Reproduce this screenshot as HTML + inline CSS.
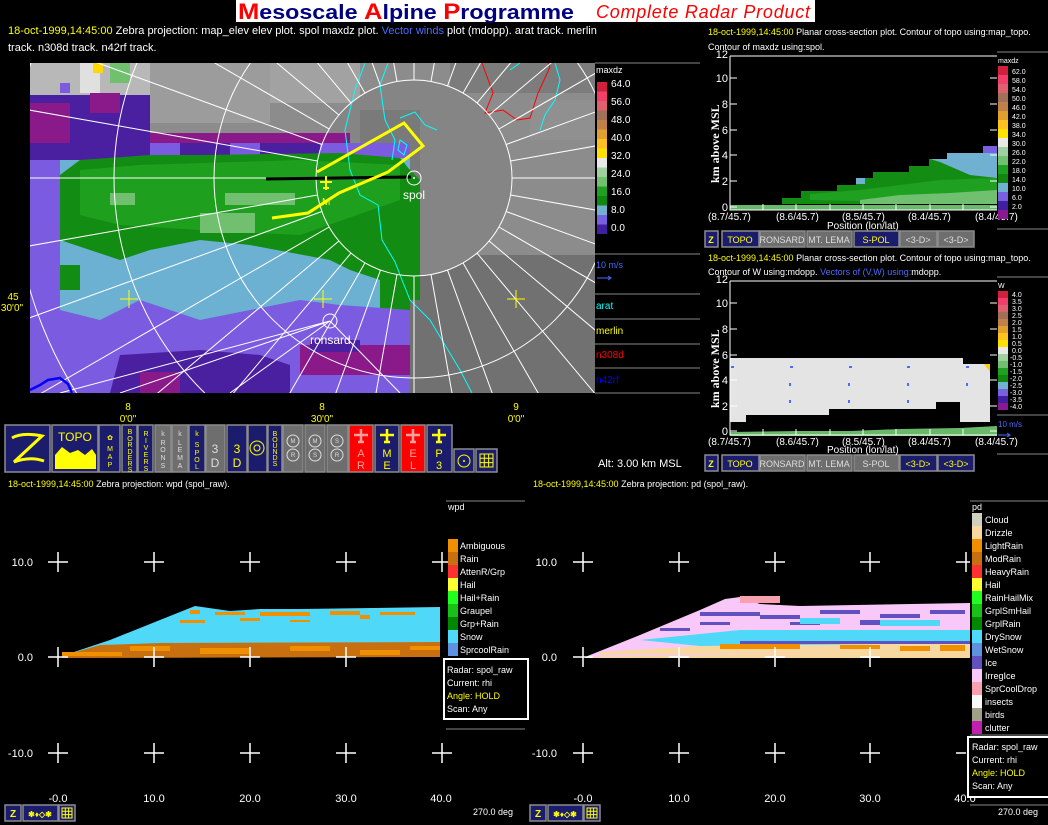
<!DOCTYPE html>
<html><head><meta charset="utf-8"><style>
html,body{margin:0;padding:0;background:#000;width:1048px;height:825px;overflow:hidden}
svg{display:block}
text{font-family:"Liberation Sans",sans-serif;}
</style></head><body>
<svg width="1048" height="825" viewBox="0 0 1048 825" xmlns="http://www.w3.org/2000/svg">
<rect width="1048" height="825" fill="#000"/>
<!-- Title -->
<rect x="236" y="0" width="579" height="22" fill="#fff"/>
<text x="238" y="19" font-size="20" font-weight="bold" fill="#000080" textLength="336" lengthAdjust="spacingAndGlyphs"><tspan fill="#f00" font-size="22">M</tspan>esoscale <tspan fill="#f00" font-size="22">A</tspan>lpine <tspan fill="#f00" font-size="22">P</tspan>rogramme</text>
<text x="596" y="18" font-size="18" font-style="italic" fill="#f00" textLength="214">Complete Radar Product</text>
<!-- header text -->
<g font-size="11" fill="#fff">
<text x="8" y="34"><tspan fill="#ff0">18-oct-1999,14:45:00</tspan>  Zebra projection: map_elev elev  plot.  spol maxdz  plot.  <tspan fill="#4a6cff">Vector winds</tspan> plot (mdopp). arat track.   merlin</text>
<text x="8" y="51">track.   n308d track.   n42rf track.</text>
</g>
<!-- MAP -->
<defs><clipPath id="mc"><rect x="30" y="63" width="565" height="330"/></clipPath></defs>
<g clip-path="url(#mc)">
<rect x="30" y="63" width="565" height="330" fill="#8c8c8c"/>
<rect x="30" y="63" width="120" height="40" fill="#b8b8b8"/>
<rect x="150" y="63" width="120" height="60" fill="#9c9c9c"/>
<rect x="270" y="63" width="90" height="40" fill="#a2a2a2"/>
<rect x="450" y="63" width="145" height="30" fill="#7c7c7c"/>
<rect x="530" y="100" width="65" height="40" fill="#909090"/>
<rect x="410" y="255" width="185" height="138" fill="#717171"/>
<circle cx="414" cy="178" r="98" fill="#858585"/>
<rect x="360" y="110" width="60" height="80" fill="#7a7a7a"/>
<!-- data -->
<polygon points="30,95 140,95 140,133 345,133 345,143 410,143 410,240 420,250 420,393 30,393" fill="#6cb0d2"/>
<rect x="30" y="95" width="120" height="65" fill="#4a1fa0"/>
<rect x="30" y="103" width="40" height="40" fill="#8a1a8a"/>
<rect x="90" y="93" width="30" height="20" fill="#8a1a8a"/>
<rect x="60" y="83" width="10" height="10" fill="#7b5ce0"/>
<rect x="80" y="63" width="20" height="30" fill="#e0e0e0"/>
<rect x="93" y="63" width="10" height="10" fill="#ffd800"/>
<rect x="110" y="63" width="20" height="20" fill="#70c070"/>
<rect x="150" y="133" width="200" height="15" fill="#8a1a8a"/>
<rect x="150" y="143" width="260" height="15" fill="#7b5ce0"/>
<rect x="180" y="143" width="50" height="15" fill="#4a1fa0"/>
<rect x="260" y="143" width="60" height="12" fill="#4a1fa0"/>
<rect x="30" y="160" width="30" height="233" fill="#7b5ce0"/>
<polygon points="60,175 80,160 150,155 200,155 340,153 400,158 410,170 420,180 420,250 405,260 380,280 350,270 330,260 250,245 200,240 150,250 120,260 90,250 60,240" fill="#138c13"/>
<polygon points="80,170 140,165 300,160 400,165 400,200 300,235 200,230 120,225 80,215" fill="#1ea01e"/>
<rect x="110" y="193" width="25" height="12" fill="#70c070"/>
<rect x="225" y="193" width="70" height="12" fill="#70c070"/>
<rect x="200" y="213" width="55" height="20" fill="#70c070"/>
<rect x="60" y="265" width="20" height="25" fill="#138c13"/>
<rect x="380" y="250" width="40" height="60" fill="#138c13"/>
<polygon points="30,330 60,310 100,320 140,300 200,320 250,310 300,300 340,305 410,310 410,393 30,393" fill="#7b5ce0"/>
<polygon points="110,393 120,355 200,350 260,355 290,365 290,393" fill="#4a1fa0"/>
<rect x="140" y="372" width="40" height="21" fill="#8a1a8a"/>
<rect x="300" y="345" width="110" height="30" fill="#8a1a8a"/>
<rect x="310" y="340" width="50" height="12" fill="#4a1fa0"/>
<rect x="410" y="300" width="185" height="93" fill="#717171"/>
<!-- contours -->
<path d="M365,63 L355,90 L345,130 L350,170 L360,195 L378,205 L382,240 L395,262 L402,280 L410,300 L430,320 L445,345 L460,370 L472,393" stroke="#0ff" fill="none" stroke-width="1"/>
<path d="M388,63 L380,85 L385,120 L395,140 L392,160 M400,118 L415,112 L425,125 L437,130 M398,150 L400,140 L407,145 L404,155 Z" stroke="#0ff" fill="none"/>
<path d="M555,63 L560,80 L555,100 L545,115 L540,130 M520,63 L510,70" stroke="#0ff" fill="none"/>
<path d="M482,63 L493,93 L485,113 L503,110 L517,120 L530,118 L538,93 L550,67 L548,63" stroke="#f00" fill="none"/>
<!-- rings & radials -->
<g stroke="#fff" fill="none" stroke-width="1">
<circle cx="414" cy="178" r="98"/><circle cx="414" cy="178" r="200"/><circle cx="414" cy="178" r="300"/><circle cx="414" cy="178" r="400"/>
<path d="M512 178 L1114 178 M510.5 195 L1103.5 299.8 M506.1 211.5 L1072 417.4 M498.9 227 L1020 528 M489.1 241 L950 628 M477 253.1 L864 714 M463 262.9 L764 784 M447.5 270.1 L653 836 M431 274.5 L536 867.5 M414 276 L414 878 M397 274.5 L292 867.5 M380.5 270.1 L175 836 M365 262.9 L64 784 M351 253.1 L-36 714 M338.9 241 L-122 628 M329.1 227 L-192 528 M321.9 211.5 L-244 417.4 M317.5 195 L-275.5 299.8 M316 178 L-286 178 M317.5 161 L-275.5 56.2 M321.9 144.5 L-244 -61.4 M329.1 129 L-192 -172 M338.9 115 L-122 -272 M351 102.9 L-36 -358 M365 93.1 L64 -428 M380.5 85.9 L175 -480 M397 81.5 L292 -511.5 M414 80 L414 -522 M431 81.5 L536 -511.5 M447.5 85.9 L653 -480 M463 93.1 L764 -428 M477 102.9 L864 -358 M489.1 115 L950 -272 M498.9 129 L1020 -172 M506.1 144.5 L1072 -61.4 M510.5 161 L1103.5 56.2"/>
<path d="M330,321 L60,393 M330,321 L120,393 M330,321 L230,393 M330,321 L400,393"/>
</g>
<!-- tracks -->
<path d="M266,179 L411,177" stroke="#000" stroke-width="3"/>
<path d="M317,172 L404,123 L423,146 L388,172 L339,193 L308,213 L272,218" stroke="#ff0" stroke-width="3" fill="none"/>
<path d="M326,176 L326,190 M320,182 L332,182 M323,188 L329,188" stroke="#ff0" stroke-width="2"/>
<text x="322" y="205" font-size="10" fill="#ff0">M</text>
<circle cx="414" cy="178" r="7" stroke="#fff" fill="none"/><circle cx="414" cy="178" r="1" fill="#fff"/>
<text x="403" y="199" font-size="12" fill="#fff">spol</text>
<circle cx="330" cy="321" r="7" stroke="#fff" fill="none"/>
<text x="310" y="344" font-size="12" fill="#fff">ronsard</text>
<path d="M120,299 h18 M129,290 v18 M314,299 h18 M323,290 v18 M507,299 h18 M516,290 v18" stroke="#ff0"/>
<path d="M30,390 L40,385 L48,380 L60,378 L68,384 L72,393" stroke="#00f" stroke-width="2.5" fill="none"/>
</g>
<!-- map legend -->
<g font-size="10" fill="#fff">
<text x="596" y="73" font-size="9">maxdz</text>
<line x1="595" y1="63" x2="700" y2="63" stroke="#888"/>
<rect x="597" y="82" width="10" height="9.5" fill="#d0203c"/><rect x="597" y="91.5" width="10" height="9.5" fill="#f0406a"/>
<rect x="597" y="101" width="10" height="9.5" fill="#e06070"/><rect x="597" y="110.5" width="10" height="9.5" fill="#a07058"/>
<rect x="597" y="120" width="10" height="9.5" fill="#c08048"/><rect x="597" y="129.5" width="10" height="9.5" fill="#e0a030"/>
<rect x="597" y="139" width="10" height="9.5" fill="#ffc020"/><rect x="597" y="148.5" width="10" height="9.5" fill="#ffe000"/>
<rect x="597" y="158" width="10" height="9.5" fill="#e8e8e8"/><rect x="597" y="167.5" width="10" height="9.5" fill="#a0d0a0"/>
<rect x="597" y="177" width="10" height="9.5" fill="#70c070"/><rect x="597" y="186.5" width="10" height="9.5" fill="#20a020"/>
<rect x="597" y="196" width="10" height="9.5" fill="#108810"/><rect x="597" y="205.5" width="10" height="9.5" fill="#70b0d0"/>
<rect x="597" y="215" width="10" height="9.5" fill="#7860e0"/><rect x="597" y="224.5" width="10" height="9.5" fill="#4020a0"/>
<text x="611" y="87">64.0</text><text x="611" y="105">56.0</text><text x="611" y="123">48.0</text><text x="611" y="141">40.0</text><text x="611" y="159">32.0</text><text x="611" y="177">24.0</text><text x="611" y="195">16.0</text><text x="611" y="213">8.0</text><text x="611" y="231">0.0</text>
<g stroke="#888"><line x1="595" y1="254" x2="700" y2="254"/><line x1="595" y1="294" x2="700" y2="294"/><line x1="595" y1="319" x2="700" y2="319"/><line x1="595" y1="344" x2="700" y2="344"/><line x1="595" y1="368" x2="700" y2="368"/><line x1="595" y1="393" x2="700" y2="393"/></g>
<text x="596" y="268" fill="#4a6cff" font-size="9">10 m/s</text>
<path d="M597,278 h14 M608,276 l3,2 l-3,2" stroke="#4a6cff" fill="none"/>
<text x="596" y="309" fill="#0ff">arat</text>
<text x="596" y="334" fill="#ff0">merlin</text>
<text x="596" y="358" fill="#f00">n308d</text>
<text x="596" y="383" fill="#00f">n42rf</text>
</g>
<g font-size="10" fill="#ff0" text-anchor="middle">
<text x="13" y="300">45</text><text x="12" y="311">30'0"</text>
<text x="128" y="410">8</text><text x="128" y="422">0'0"</text>
<text x="322" y="410">8</text><text x="322" y="422">30'0"</text>
<text x="516" y="410">9</text><text x="516" y="422">0'0"</text>
</g>
<!-- toolbar -->
<g stroke="#8c8c8c" stroke-width="1.5">
<rect x="5" y="425" width="45" height="47" fill="#1c1c6c"/>
<rect x="52" y="425" width="46" height="47" fill="#1c1c6c"/>
<rect x="99" y="425" width="21" height="47" fill="#1c1c6c"/>
<rect x="122" y="425" width="15" height="47" fill="#1c1c6c"/>
<rect x="138" y="425" width="15" height="47" fill="#1c1c6c"/>
<rect x="155" y="425" width="16" height="47" fill="#6e6e6e"/>
<rect x="172" y="425" width="16" height="47" fill="#6e6e6e"/>
<rect x="189" y="425" width="16" height="47" fill="#1c1c6c"/>
<rect x="206" y="425" width="19" height="47" fill="#6e6e6e"/>
<rect x="227" y="425" width="20" height="47" fill="#1c1c6c"/>
<rect x="248" y="425" width="19" height="47" fill="#1c1c6c"/>
<rect x="268" y="425" width="14" height="47" fill="#1c1c6c"/>
<rect x="283" y="425" width="20" height="47" fill="#6e6e6e"/>
<rect x="305" y="425" width="20" height="47" fill="#6e6e6e"/>
<rect x="327" y="425" width="21" height="47" fill="#6e6e6e"/>
<rect x="349" y="425" width="24" height="47" fill="#f00"/>
<rect x="375" y="425" width="24" height="47" fill="#1c1c6c"/>
<rect x="401" y="425" width="24" height="47" fill="#f00"/>
<rect x="427" y="425" width="25" height="47" fill="#1c1c6c"/>
<rect x="454" y="449" width="20" height="23" fill="#1c1c6c"/>
<rect x="476" y="449" width="21" height="23" fill="#1c1c6c"/>
</g>
<path d="M12,438 Q22,432 42,436 L14,462 Q30,456 44,461" stroke="#ff0" stroke-width="3" fill="none"/>
<text x="58" y="441" font-size="12" fill="#ff0">TOPO</text>
<polygon points="55,469 55,455 62,447 70,453 78,450 85,455 92,449 96,455 96,469" fill="#ff0"/>
<g font-size="7" fill="#ff0" text-anchor="middle">
<text x="110" y="440">✿</text><text x="110" y="451">M</text><text x="110" y="459">A</text><text x="110" y="467">P</text>
<text x="130" y="434">B</text><text x="130" y="441">O</text><text x="130" y="447">R</text><text x="130" y="454">D</text><text x="130" y="460">E</text><text x="130" y="466">R</text><text x="130" y="472">S</text>
<text x="146" y="436">R</text><text x="146" y="443">I</text><text x="146" y="450">V</text><text x="146" y="457">E</text><text x="146" y="464">R</text><text x="146" y="471">S</text>
<g fill="#ddd"><text x="163" y="436">k</text><text x="163" y="445">R</text><text x="163" y="452">O</text><text x="163" y="460">N</text><text x="163" y="468">S</text>
<text x="180" y="436">k</text><text x="180" y="445">L</text><text x="180" y="452">E</text><text x="180" y="460">M</text><text x="180" y="468">A</text></g>
<text x="197" y="436">k</text><text x="197" y="447">S</text><text x="197" y="455">P</text><text x="197" y="462">O</text><text x="197" y="469">L</text>
<text x="275" y="436">B</text><text x="275" y="442">O</text><text x="275" y="448">U</text><text x="275" y="454">N</text><text x="275" y="460">D</text><text x="275" y="466">S</text>
</g>
<g font-size="12" text-anchor="middle">
<text x="215" y="453" fill="#ddd">3</text><text x="215" y="467" fill="#ddd">D</text>
<text x="237" y="453" fill="#ff0">3</text><text x="237" y="467" fill="#ff0">D</text>
</g>
<circle cx="257" cy="448" r="7" stroke="#ff0" fill="none"/><circle cx="257" cy="448" r="3" stroke="#ff0" fill="none"/>
<g stroke="#ddd" fill="none"><circle cx="293" cy="441" r="6"/><circle cx="293" cy="455" r="6"/><circle cx="315" cy="441" r="6"/><circle cx="315" cy="455" r="6"/><circle cx="337" cy="441" r="6"/><circle cx="337" cy="455" r="6"/></g>
<g font-size="6" fill="#ddd" text-anchor="middle"><text x="293" y="443">M</text><text x="293" y="457">R</text><text x="315" y="443">M</text><text x="315" y="457">S</text><text x="337" y="443">S</text><text x="337" y="457">R</text></g>
<g stroke-width="2.5"><path d="M361,429 v14 M354,435 h14 M358,442 h6" stroke="#f8a0a0"/><path d="M387,429 v14 M380,435 h14 M384,442 h6" stroke="#ff0"/><path d="M413,429 v14 M406,435 h14 M410,442 h6" stroke="#f8a0a0"/><path d="M439,429 v14 M432,435 h14 M436,442 h6" stroke="#ff0"/></g>
<g font-size="11" text-anchor="middle"><text x="361" y="457" fill="#f8a0a0">A</text><text x="361" y="469" fill="#f8a0a0">R</text><text x="387" y="457" fill="#ff0">M</text><text x="387" y="469" fill="#ff0">E</text><text x="413" y="457" fill="#f8a0a0">E</text><text x="413" y="469" fill="#f8a0a0">L</text><text x="439" y="457" fill="#ff0">P</text><text x="439" y="469" fill="#ff0">3</text></g>
<circle cx="464" cy="461" r="6" stroke="#ff0" fill="none"/><circle cx="464" cy="461" r="1" fill="#ff0"/>
<path d="M480,454 h13 v13 h-13 z M480,458.3 h13 M480,462.6 h13 M484.3,454 v13 M488.6,454 v13" stroke="#ff0" fill="none"/>
<text x="598" y="467" font-size="11" fill="#fff">Alt: 3.00 km MSL</text>
<text x="8" y="487" font-size="9" fill="#fff"><tspan fill="#ff0">18-oct-1999,14:45:00</tspan>  Zebra projection: wpd (spol_raw).</text>
<text x="533" y="487" font-size="9" fill="#fff"><tspan fill="#ff0">18-oct-1999,14:45:00</tspan>  Zebra projection: pd (spol_raw).</text>

<!-- RIGHT TOP -->
<text x="708" y="35" font-size="9" fill="#fff"><tspan fill="#ff0">18-oct-1999,14:45:00</tspan>  Planar cross-section plot.  Contour of topo using:map_topo.</text>
<text x="708" y="50" font-size="9" fill="#fff">Contour of maxdz using:spol.</text>
<line x1="997" y1="52" x2="1048" y2="52" stroke="#888"/>
<polygon points="730,205 997,205 997,210 730,210" fill="#6ab86a"/>
<polygon points="782,204 782,198 801,198 801,191 837,191 837,185 856,185 856,178 873,178 873,172 909,172 909,166 929,166 929,159 947,159 947,153 997,153 997,204" fill="#138c13"/>
<polygon points="810,200 810,194 860,190 900,185 940,180 997,178 997,204" fill="#20a020"/>
<polygon points="860,200 900,195 950,193 997,190 997,204 860,204" fill="#70c070"/>
<polygon points="930,159 947,159 947,153 997,153 997,178 970,175 940,162" fill="#70b0d0"/>
<rect x="856" y="178" width="9" height="6" fill="#70b0d0"/>
<rect x="983" y="146" width="14" height="7" fill="#7860e0"/>
<path d="M730,56 V210 H997" stroke="#fff" fill="none"/><line x1="730" y1="56" x2="997" y2="56" stroke="#fff"/>
<g stroke="#fff"><path d="M730,207h7 M730,181h7 M730,155h7 M730,130h7 M730,104h7 M730,78h7 M990,207h7 M990,181h7 M990,155h7 M990,130h7 M990,104h7 M990,78h7 M763,210v-6 M796,210v-6 M830,210v-6 M863,210v-6 M896,210v-6 M930,210v-6 M963,210v-6"/></g>
<g font-size="11" fill="#fff" text-anchor="end"><text x="728" y="211">0</text><text x="728" y="185">2</text><text x="728" y="159">4</text><text x="728" y="134">6</text><text x="728" y="108">8</text><text x="728" y="82">10</text><text x="728" y="58">12</text></g>
<text transform="translate(719,183) rotate(-90)" font-size="12" font-weight="bold" fill="#fff" style="font-family:'Liberation Serif',serif">km above MSL</text>
<g font-size="10" fill="#fff"><text x="708" y="220">(8.7/45.7)</text><text x="776" y="220">(8.6/45.7)</text><text x="842" y="220">(8.5/45.7)</text><text x="908" y="220">(8.4/45.7)</text><text x="975" y="220">(8.4/45.7)</text><text x="827" y="229">Position (lon/lat)</text></g>
<g font-size="7" fill="#fff">
<text x="998" y="63">maxdz</text>
<rect x="998" y="66" width="10" height="9" fill="#d0203c"/><rect x="998" y="75" width="10" height="9" fill="#f0406a"/><rect x="998" y="84" width="10" height="9" fill="#e06070"/><rect x="998" y="93" width="10" height="9" fill="#a07058"/><rect x="998" y="102" width="10" height="9" fill="#c08048"/><rect x="998" y="111" width="10" height="9" fill="#e0a030"/><rect x="998" y="120" width="10" height="9" fill="#ffc020"/><rect x="998" y="129" width="10" height="9" fill="#ffe000"/><rect x="998" y="138" width="10" height="9" fill="#e8e8e8"/><rect x="998" y="147" width="10" height="9" fill="#a0d0a0"/><rect x="998" y="156" width="10" height="9" fill="#70c070"/><rect x="998" y="165" width="10" height="9" fill="#20a020"/><rect x="998" y="174" width="10" height="9" fill="#108810"/><rect x="998" y="183" width="10" height="9" fill="#70b0d0"/><rect x="998" y="192" width="10" height="9" fill="#7860e0"/><rect x="998" y="201" width="10" height="9" fill="#4020a0"/><rect x="998" y="210" width="10" height="9" fill="#8a1890"/>
<text x="1012" y="74">62.0</text><text x="1012" y="83">58.0</text><text x="1012" y="92">54.0</text><text x="1012" y="101">50.0</text><text x="1012" y="110">46.0</text><text x="1012" y="119">42.0</text><text x="1012" y="128">38.0</text><text x="1012" y="137">34.0</text><text x="1012" y="146">30.0</text><text x="1012" y="155">26.0</text><text x="1012" y="164">22.0</text><text x="1012" y="173">18.0</text><text x="1012" y="182">14.0</text><text x="1012" y="191">10.0</text><text x="1012" y="200">6.0</text><text x="1012" y="209">2.0</text>
</g>
<line x1="997" y1="229" x2="1048" y2="229" stroke="#888"/>
<!-- buttons rows -->
<g stroke="#8c8c8c" stroke-width="1.5">
<rect x="705" y="231" width="13" height="16" fill="#1c1c6c"/><rect x="722" y="231" width="37" height="16" fill="#1c1c6c"/><rect x="760" y="231" width="45" height="16" fill="#6e6e6e"/><rect x="807" y="231" width="45" height="16" fill="#6e6e6e"/><rect x="854" y="231" width="45" height="16" fill="#1c1c6c"/><rect x="900" y="231" width="37" height="16" fill="#6e6e6e"/><rect x="938" y="231" width="36" height="16" fill="#6e6e6e"/>
<rect x="705" y="455" width="13" height="16" fill="#1c1c6c"/><rect x="722" y="455" width="37" height="16" fill="#1c1c6c"/><rect x="760" y="455" width="45" height="16" fill="#6e6e6e"/><rect x="807" y="455" width="45" height="16" fill="#6e6e6e"/><rect x="854" y="455" width="45" height="16" fill="#6e6e6e"/><rect x="900" y="455" width="37" height="16" fill="#1c1c6c"/><rect x="938" y="455" width="36" height="16" fill="#1c1c6c"/>
</g>
<g font-size="9" text-anchor="middle">
<text x="711" y="243" fill="#ff0" font-weight="bold">Z</text><text x="740" y="243" fill="#ff0">TOPO</text><text x="782" y="243" fill="#ddd">RONSARD</text><text x="829" y="243" fill="#ddd">MT. LEMA</text><text x="876" y="243" fill="#ff0">S-POL</text><text x="918" y="243" fill="#ddd">&lt;3-D&gt;</text><text x="956" y="243" fill="#ddd">&lt;3-D&gt;</text>
<text x="711" y="467" fill="#ff0" font-weight="bold">Z</text><text x="740" y="467" fill="#ff0">TOPO</text><text x="782" y="467" fill="#ddd">RONSARD</text><text x="829" y="467" fill="#ddd">MT. LEMA</text><text x="876" y="467" fill="#ddd">S-POL</text><text x="918" y="467" fill="#ff0">&lt;3-D&gt;</text><text x="956" y="467" fill="#ff0">&lt;3-D&gt;</text>
</g>
<!-- RIGHT 2 -->
<text x="708" y="261" font-size="9" fill="#fff"><tspan fill="#ff0">18-oct-1999,14:45:00</tspan>  Planar cross-section plot.  Contour of topo using:map_topo.</text>
<text x="708" y="275" font-size="9" fill="#fff">Contour of W using:mdopp.  <tspan fill="#4a6cff">Vectors of (V,W) using:</tspan>mdopp.</text>
<line x1="997" y1="277" x2="1048" y2="277" stroke="#888"/>
<polygon points="730,358 963,358 963,364 990,364 990,422 960,422 960,402 936,402 936,409 829,409 829,415 746,415 746,422 730,422" fill="#e4e4e4"/>
<polygon points="984,364 990,364 990,372" fill="#ffd000"/>
<polygon points="730,432 800,431 850,431 900,429 960,428 997,426 997,436 730,436" fill="#6ab86a"/>
<g fill="#4a6cff"><rect x="790" y="366" width="3" height="2"/><rect x="849" y="366" width="3" height="2"/><rect x="907" y="366" width="3" height="2"/><rect x="966" y="366" width="3" height="2"/><rect x="789" y="383" width="2" height="3"/><rect x="848" y="383" width="2" height="3"/><rect x="907" y="383" width="2" height="3"/><rect x="966" y="383" width="2" height="3"/><rect x="789" y="400" width="2" height="3"/><rect x="848" y="400" width="2" height="3"/><rect x="907" y="400" width="2" height="3"/><rect x="731" y="366" width="3" height="2"/></g>
<path d="M730,281 V435 H997" stroke="#fff" fill="none"/><line x1="730" y1="281" x2="997" y2="281" stroke="#fff"/>
<g stroke="#fff"><path d="M730,431h7 M730,406h7 M730,380h7 M730,355h7 M730,329h7 M730,303h7 M990,431h7 M990,406h7 M990,380h7 M990,355h7 M990,329h7 M990,303h7 M763,435v-6 M796,435v-6 M830,435v-6 M863,435v-6 M896,435v-6 M930,435v-6 M963,435v-6"/></g>
<g font-size="11" fill="#fff" text-anchor="end"><text x="728" y="435">0</text><text x="728" y="410">2</text><text x="728" y="384">4</text><text x="728" y="359">6</text><text x="728" y="333">8</text><text x="728" y="307">10</text><text x="728" y="283">12</text></g>
<text transform="translate(719,408) rotate(-90)" font-size="12" font-weight="bold" fill="#fff" style="font-family:'Liberation Serif',serif">km above MSL</text>
<g font-size="10" fill="#fff"><text x="708" y="445">(8.7/45.7)</text><text x="776" y="445">(8.6/45.7)</text><text x="842" y="445">(8.5/45.7)</text><text x="908" y="445">(8.4/45.7)</text><text x="975" y="445">(8.4/45.7)</text><text x="827" y="453">Position (lon/lat)</text></g>
<g font-size="7" fill="#fff">
<text x="998" y="288">W</text>
<rect x="998" y="291" width="10" height="7" fill="#d0203c"/><rect x="998" y="298" width="10" height="7" fill="#f0406a"/><rect x="998" y="305" width="10" height="7" fill="#e06070"/><rect x="998" y="312" width="10" height="7" fill="#a07058"/><rect x="998" y="319" width="10" height="7" fill="#c08048"/><rect x="998" y="326" width="10" height="7" fill="#e0a030"/><rect x="998" y="333" width="10" height="7" fill="#ffc020"/><rect x="998" y="340" width="10" height="7" fill="#ffe000"/><rect x="998" y="347" width="10" height="7" fill="#e8e8e8"/><rect x="998" y="354" width="10" height="7" fill="#a0d0a0"/><rect x="998" y="361" width="10" height="7" fill="#70c070"/><rect x="998" y="368" width="10" height="7" fill="#20a020"/><rect x="998" y="375" width="10" height="7" fill="#108810"/><rect x="998" y="382" width="10" height="7" fill="#70b0d0"/><rect x="998" y="389" width="10" height="7" fill="#7860e0"/><rect x="998" y="396" width="10" height="7" fill="#4020a0"/><rect x="998" y="403" width="10" height="7" fill="#8a1890"/>
<text x="1012" y="297">4.0</text><text x="1012" y="304">3.5</text><text x="1012" y="311">3.0</text><text x="1012" y="318">2.5</text><text x="1012" y="325">2.0</text><text x="1012" y="332">1.5</text><text x="1012" y="339">1.0</text><text x="1012" y="346">0.5</text><text x="1012" y="353">0.0</text><text x="1010" y="360">-0.5</text><text x="1010" y="367">-1.0</text><text x="1010" y="374">-1.5</text><text x="1010" y="381">-2.0</text><text x="1010" y="388">-2.5</text><text x="1010" y="395">-3.0</text><text x="1010" y="402">-3.5</text><text x="1010" y="409">-4.0</text>
</g>
<line x1="997" y1="415" x2="1048" y2="415" stroke="#888"/>
<text x="998" y="427" font-size="8" fill="#4a6cff">10 m/s</text>
<path d="M998,435 h12 M1007,433 l3,2 l-3,2" stroke="#4a6cff" fill="none"/>
<line x1="997" y1="454" x2="1048" y2="454" stroke="#888"/>

<!-- BOTTOM LEFT -->
<polygon points="62,656 110,640 160,620 195,606 230,611 260,609 300,609 440,607 440,646 62,658" fill="#50d8f8"/>
<polygon points="62,656 100,645 160,643 440,642 440,657 62,658" fill="#c87010"/>
<g fill="#f09000"><rect x="62" y="652" width="60" height="4"/><rect x="130" y="646" width="40" height="5"/><rect x="200" y="648" width="50" height="6"/><rect x="290" y="646" width="40" height="5"/><rect x="360" y="650" width="40" height="5"/><rect x="410" y="646" width="30" height="4"/>
<rect x="190" y="610" width="10" height="4"/><rect x="215" y="612" width="30" height="3"/><rect x="260" y="612" width="50" height="4"/><rect x="330" y="611" width="30" height="4"/><rect x="380" y="612" width="35" height="3"/><rect x="180" y="620" width="25" height="3"/><rect x="240" y="618" width="20" height="3"/><rect x="290" y="620" width="20" height="2"/><rect x="360" y="615" width="10" height="4"/></g>
<g stroke="#fff" stroke-width="1.5"><path d="M48,562h20M58,552v20 M144,562h20M154,552v20 M240,562h20M250,552v20 M336,562h20M346,552v20 M432,562h20M442,552v20 M48,657h20M58,647v20 M144,657h20M154,647v20 M240,657h20M250,647v20 M336,657h20M346,647v20 M48,753h20M58,743v20 M144,753h20M154,743v20 M240,753h20M250,743v20 M336,753h20M346,743v20 M432,753h20M442,743v20"/></g>
<g font-size="11" fill="#fff"><text x="33" y="566" text-anchor="end">10.0</text><text x="33" y="661" text-anchor="end">0.0</text><text x="33" y="757" text-anchor="end">-10.0</text>
<g text-anchor="middle"><text x="58" y="802">-0.0</text><text x="154" y="802">10.0</text><text x="250" y="802">20.0</text><text x="346" y="802">30.0</text><text x="441" y="802">40.0</text></g></g>
<text x="473" y="815" font-size="9" fill="#fff">270.0 deg</text>
<line x1="446" y1="501" x2="525" y2="501" stroke="#888"/>
<text x="448" y="510" font-size="9" fill="#fff">wpd</text>
<g font-size="9" fill="#fff">
<rect x="448" y="539" width="10" height="13" fill="#f09000"/><rect x="448" y="552" width="10" height="13" fill="#c87010"/><rect x="448" y="565" width="10" height="13" fill="#ff3030"/><rect x="448" y="578" width="10" height="13" fill="#ffff30"/><rect x="448" y="591" width="10" height="13" fill="#20ff20"/><rect x="448" y="604" width="10" height="13" fill="#18c018"/><rect x="448" y="617" width="10" height="13" fill="#008800"/><rect x="448" y="630" width="10" height="13" fill="#50d8f8"/><rect x="448" y="643" width="10" height="13" fill="#6090e0"/>
<text x="460" y="549">Ambiguous</text><text x="460" y="562">Rain</text><text x="460" y="575">AttenR/Grp</text><text x="460" y="588">Hail</text><text x="460" y="601">Hail+Rain</text><text x="460" y="614">Graupel</text><text x="460" y="627">Grp+Rain</text><text x="460" y="640">Snow</text><text x="460" y="653">SprcoolRain</text>
</g>
<rect x="444" y="659" width="84" height="60" fill="#000" stroke="#fff" stroke-width="2"/>
<g font-size="9" fill="#fff"><text x="447" y="673">Radar: spol_raw</text><text x="447" y="686">Current: rhi</text><text x="447" y="699" fill="#ff0">Angle: HOLD</text><text x="447" y="712">Scan: Any</text></g>
<line x1="446" y1="729" x2="525" y2="729" stroke="#888"/>

<!-- BOTTOM RIGHT -->
<polygon points="585,657 640,635 700,610 725,599 740,597 760,604 800,606 970,603 970,657" fill="#f8c8f8"/>
<polygon points="585,657 970,650 970,658 585,658" fill="#f8d8a0"/>
<polygon points="600,652 700,646 970,643 970,651 600,655" fill="#f8d8a0"/>
<polygon points="640,640 740,630 970,630 970,643 700,646" fill="#50d8f8"/>
<g fill="#6050c0"><rect x="700" y="612" width="60" height="4"/><rect x="760" y="615" width="40" height="4"/><rect x="820" y="610" width="40" height="4"/><rect x="880" y="614" width="40" height="4"/><rect x="930" y="610" width="35" height="4"/><rect x="700" y="622" width="30" height="3"/><rect x="790" y="622" width="30" height="3"/><rect x="860" y="620" width="20" height="5"/><rect x="660" y="628" width="30" height="3"/><rect x="740" y="641" width="230" height="3"/></g>
<g fill="#f09000"><rect x="720" y="644" width="80" height="5"/><rect x="840" y="645" width="40" height="4"/><rect x="900" y="646" width="30" height="5"/><rect x="940" y="645" width="25" height="6"/></g>
<rect x="740" y="596" width="40" height="7" fill="#f8a0b0"/>
<g fill="#50d8f8"><rect x="800" y="618" width="40" height="6"/><rect x="880" y="620" width="60" height="6"/></g>
<g stroke="#fff" stroke-width="1.5"><path d="M573,562h20M583,552v20 M669,562h20M679,552v20 M765,562h20M775,552v20 M860,562h20M870,552v20 M956,562h14M966,552v20 M573,657h20M583,647v20 M669,657h20M679,647v20 M765,657h20M775,647v20 M860,657h20M870,647v20 M573,753h20M583,743v20 M669,753h20M679,743v20 M765,753h20M775,743v20 M860,753h20M870,743v20 M956,753h10"/></g>
<g font-size="11" fill="#fff"><text x="557" y="566" text-anchor="end">10.0</text><text x="557" y="661" text-anchor="end">0.0</text><text x="557" y="757" text-anchor="end">-10.0</text>
<g text-anchor="middle"><text x="583" y="802">-0.0</text><text x="679" y="802">10.0</text><text x="775" y="802">20.0</text><text x="870" y="802">30.0</text><text x="965" y="802">40.0</text></g></g>
<line x1="970" y1="501" x2="1048" y2="501" stroke="#888"/>
<text x="972" y="510" font-size="9" fill="#fff">pd</text>
<g font-size="9" fill="#fff">
<rect x="972" y="513" width="10" height="13" fill="#d0d0c0"/><rect x="972" y="526" width="10" height="13" fill="#f8d8a0"/><rect x="972" y="539" width="10" height="13" fill="#f09000"/><rect x="972" y="552" width="10" height="13" fill="#c87010"/><rect x="972" y="565" width="10" height="13" fill="#ff3030"/><rect x="972" y="578" width="10" height="13" fill="#ffff30"/><rect x="972" y="591" width="10" height="13" fill="#20ff20"/><rect x="972" y="604" width="10" height="13" fill="#18c018"/><rect x="972" y="617" width="10" height="13" fill="#008800"/><rect x="972" y="630" width="10" height="13" fill="#50d8f8"/><rect x="972" y="643" width="10" height="13" fill="#6090e0"/><rect x="972" y="656" width="10" height="13" fill="#6050c0"/><rect x="972" y="669" width="10" height="13" fill="#f8c8f8"/><rect x="972" y="682" width="10" height="13" fill="#f8a0b0"/><rect x="972" y="695" width="10" height="13" fill="#f8f8f8"/><rect x="972" y="708" width="10" height="13" fill="#a0a088"/><rect x="972" y="721" width="10" height="13" fill="#c020b0"/>
<text x="985" y="523">Cloud</text><text x="985" y="536">Drizzle</text><text x="985" y="549">LightRain</text><text x="985" y="562">ModRain</text><text x="985" y="575">HeavyRain</text><text x="985" y="588">Hail</text><text x="985" y="601">RainHailMix</text><text x="985" y="614">GrplSmHail</text><text x="985" y="627">GrplRain</text><text x="985" y="640">DrySnow</text><text x="985" y="653">WetSnow</text><text x="985" y="666">Ice</text><text x="985" y="679">IrregIce</text><text x="985" y="692">SprCoolDrop</text><text x="985" y="705">insects</text><text x="985" y="718">birds</text><text x="985" y="731">clutter</text>
</g>
<line x1="970" y1="735" x2="1048" y2="735" stroke="#888"/>
<rect x="968" y="737" width="82" height="60" fill="#000" stroke="#fff" stroke-width="2"/>
<g font-size="9" fill="#fff"><text x="972" y="750">Radar: spol_raw</text><text x="972" y="763">Current: rhi</text><text x="972" y="776" fill="#ff0">Angle: HOLD</text><text x="972" y="789">Scan: Any</text></g>
<line x1="970" y1="805" x2="1048" y2="805" stroke="#888"/>
<text x="998" y="815" font-size="9" fill="#fff">270.0 deg</text>
<!-- bottom buttons -->
<g stroke="#8c8c8c" stroke-width="1.5">
<rect x="5" y="805" width="16" height="16" fill="#1c1c6c"/><rect x="23" y="805" width="35" height="16" fill="#1c1c6c"/><rect x="59" y="805" width="16" height="16" fill="#1c1c6c"/>
<rect x="530" y="805" width="16" height="16" fill="#1c1c6c"/><rect x="548" y="805" width="35" height="16" fill="#1c1c6c"/><rect x="584" y="805" width="16" height="16" fill="#1c1c6c"/>
</g>
<g font-size="10" fill="#ff0" font-weight="bold" text-anchor="middle"><text x="13" y="817">Z</text><text x="40" y="817" font-size="8">✱♦◇✱</text><text x="538" y="817">Z</text><text x="565" y="817" font-size="8">✱♦◇✱</text></g>
<path d="M62,808 h10 v10 h-10 z M62,811.3 h10 M62,814.6 h10 M65.3,808 v10 M68.6,808 v10 M587,808 h10 v10 h-10 z M587,811.3 h10 M587,814.6 h10 M590.3,808 v10 M593.6,808 v10" stroke="#ff0" fill="none"/>
</svg>
</body></html>
